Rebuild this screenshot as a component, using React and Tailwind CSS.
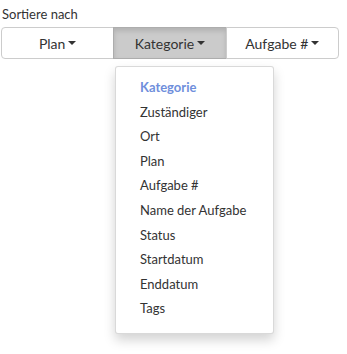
import React from "react";

const Caret = () => (
  <span className="inline-block ml-[3px] align-middle w-0 h-0 border-l-[4px] border-r-[4px] border-t-[4px] border-l-transparent border-r-transparent border-t-[#333]" />
);

export default function App() {
  const items = [
    "Zuständiger",
    "Ort",
    "Plan",
    "Aufgabe #",
    "Name der Aufgabe",
    "Status",
    "Startdatum",
    "Enddatum",
    "Tags",
  ];
  return (
    <div className="relative w-[347px] h-[354px] bg-white text-[#333]" style={{ fontFamily: "Lato, 'Noto Sans', sans-serif" }}>
      <div className="pt-[5px] pl-[2px] text-[13px] leading-[18px]">Sortiere nach</div>
      <div className="mt-[4px] ml-[1px] flex w-[338px] h-[32px] text-[14px]">
        <button className="flex-1 flex items-center justify-center border border-[#ccc] rounded-l-[4px] bg-white">
          Plan<Caret />
        </button>
        <button className="flex-1 -ml-px flex items-center justify-center border border-[#adadad] bg-[#cbcbcb] shadow-[inset_0_3px_5px_rgba(0,0,0,0.125)]">
          Kategorie<Caret />
        </button>
        <button className="flex-1 -ml-px flex items-center justify-center border border-[#ccc] rounded-r-[4px] bg-white">
          Aufgabe #<Caret />
        </button>
      </div>
      <div className="absolute left-[115px] top-[66px] w-[159px] pt-[8px] pb-[12px] bg-white border border-[rgba(0,0,0,0.15)] rounded-[3px] shadow-[0_6px_12px_rgba(0,0,0,0.175)] text-[13px]">
        <div className="pl-[24px] h-[24.6px] leading-[24.6px] font-bold text-[#6f8fdc]">Kategorie</div>
        {items.map((t) => (
          <div key={t} className="pl-[24px] h-[24.6px] leading-[24.6px] text-[#333]">{t}</div>
        ))}
      </div>
    </div>
  );
}
